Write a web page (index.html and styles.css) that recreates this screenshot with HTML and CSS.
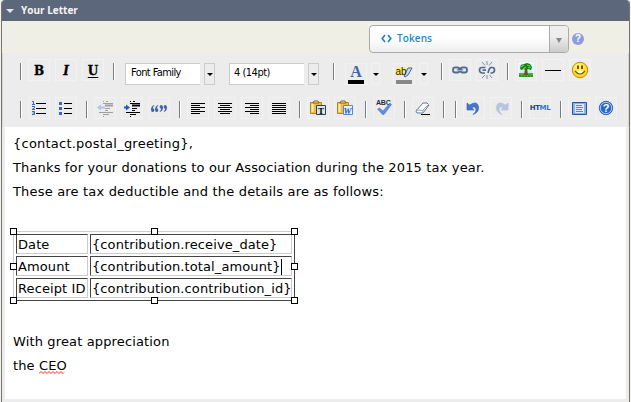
FILE: index.html
```html
<!DOCTYPE html>
<html lang="en">
<head>
<meta charset="utf-8">
<title>Your Letter</title>
<link rel="stylesheet" href="styles.css">
</head>
<body>
<main class="panel">
  <header class="head"><i class="tri"></i><span>Your Letter</span></header>
  <div class="tokenbar">
    <div class="token">
      <div class="tokenmain"><svg width="11" height="9" viewBox="0 0 11 9"><path d="M4 1 1.200 4.500 4 8M7 1l2.800 3.500L7 8" fill="none" stroke="#1684c2" stroke-width="1.600"/></svg><span>Tokens</span></div>
      <div class="tokendrop"><i></i></div>
    </div>
    <span class="hint">?</span>
  </div>
  <div class="tools">
    <div class="row">
      <i class="sep"></i>
      <b class="btn glyph">B</b>
      <b class="btn glyph it">I</b>
      <b class="btn glyph un">U</b>
      <i class="sep"></i>
      <div class="combo first"><span class="field">Font Family</span><span class="arrow"><i></i></span></div>
      <div class="combo second"><span class="field size">4 (14pt)</span><span class="arrow"><i></i></span></div>
      <i class="sep s3"></i>
      <div class="split colour"><span class="btn"><svg viewBox="0 0 22 22"><text x="11" y="14" class="lettera">A</text><path d="M3 17h16v4H3z"/></svg></span><span class="drop"><i></i></span></div>
      <div class="split"><span class="btn"><svg viewBox="0 0 22 22"><path d="M3 4h10v9H3z" fill="#fff06a"/><path d="m11 13 4-8h4l-4 7-3 2z" fill="#c5daf5" stroke="#46648f"/><text x="2.500" y="12" font-size="10" class="svgt">ab</text><path d="M3 17h16v4H3z" fill="#888"/></svg></span><span class="drop"><i></i></span></div>
      <i class="sep s4"></i>
      <span class="btn"><svg viewBox="0 0 22 22"><g fill="none" stroke="#53698d" stroke-width="1.800"><rect x="4" y="8.500" width="6.500" height="5" rx="2.300"/><rect x="11.500" y="8.500" width="6.500" height="5" rx="2.300"/><path d="M8 11h6"/></g><path d="M5 10h4M13 10h4M7 11.500h8" stroke="#c4d6ee" stroke-width=".7"/></svg></span>
      <span class="btn"><svg viewBox="0 0 22 22"><g fill="none" stroke="#53698d" stroke-width="1.700"><path d="M9.500 8.500H6q-2.500 0-2.500 2.500T6 14h3M6.500 11.200h3.500M12 14l1-3.500q1-2.500 3.500-2 2 0 2 2.500T16 14h-1.500"/></g><path d="M6 3l3 3.500M11 2v4M16 3l-3 3.500M6 19l3-3M11 20v-4M16 19l-2.500-3" stroke="#7890b0" fill="none"/></svg></span>
      <i class="sep"></i>
      <span class="btn"><svg viewBox="0 0 22 22"><path d="M4 4h14v14H4z" fill="#c8edfc" stroke="#fff"/><path d="M4 14h14v4H4z" fill="#43b52b"/><path d="M4 17h14" stroke="#28671b" stroke-dasharray="2 1"/><path d="M10 9h2l1 7H9z" fill="#79501c"/><path d="m5 9 1-3 3-1 3-1 3 1 2 3-1 3-3-1-2 1-2-1-3 1z" fill="#187d18"/><path d="m6 8 3-2M12 6l3 1M8 10l3-2M13 9l3-1" stroke="#70cc43" stroke-width="1.300"/></svg></span>
      <span class="btn"><svg viewBox="0 0 22 22"><path d="M3 11.500h16" stroke="#000"/></svg></span>
      <span class="btn"><svg viewBox="0 0 22 22"><defs><radialGradient id="sun" cx=".4" cy=".3"><stop stop-color="#fff895"/><stop offset="1" stop-color="#ffdc16"/></radialGradient></defs><circle cx="11" cy="11" r="7.700" fill="url(#sun)" stroke="#b98b12"/><path d="M9 6.500v3.500M13 6.500v3.500" stroke="#533a09" stroke-width="1.700"/><path d="M6 12q5 6 10 0" fill="#fff" stroke="#76520a" stroke-width="1.200"/></svg></span>
    </div>
    <div class="row row2">
      <i class="sep"></i>
      <span class="btn"><svg viewBox="0 0 22 22"><path d="M8 6.500h10M8 11.500h10M8 16.500h10" stroke="#000"/><path d="M4 4.500h1.500v3M4 7.500h3M4 9.500h2.500v1.500L4 12.500h3M4 14.500h2.500v3H4M4.500 16h2" fill="none" stroke="#3565bd"/></svg></span>
      <span class="btn"><svg viewBox="0 0 22 22"><path d="M9 6.500h8M9 11.500h8M9 16.500h8" stroke="#000"/><path d="M4 5h3v3H4zM4 10h3v3H4zM4 15h3v3H4z" fill="#3869bd"/></svg></span>
      <i class="sep"></i>
      <span class="btn faded"><svg viewBox="0 0 22 22"><g id="indentlines" stroke="#000"><path d="M9 4.500h1m2 0h2M9 6.500h10M11 8.500h8M11 11.500h5M11 13.500h3M5 15.500h14M9 17.500h6M9 19.500h1"/><path d="M11 8.500h8" stroke-width="2"/></g><path d="m3 10.500 4-3v2h4v2H7v2z" fill="#3e6fd0"/></svg></span>
      <span class="btn"><svg viewBox="0 0 22 22"><use href="#indentlines"/><path d="m9 10.500-4-3v2H3v2h2v2z" fill="#2459bd"/></svg></span>
      <span class="btn"><svg viewBox="0 0 22 22"><g fill="#3f65a5"><path id="quotemark" d="M6.200 8Q3 9 3 12.500q0 2.500 1.700 2.500t1.700-2q0-1.800-1.600-1.800Q5 9.500 6.200 9z"/><use href="#quotemark" x="4"/><use href="#quotemark" transform="rotate(180 11 11.500)"/><use href="#quotemark" transform="rotate(180 9 11.500)"/></g></svg></span>
      <i class="sep"></i>
      <span class="btn"><svg viewBox="0 0 22 22"><path d="M4 6.500h14M4 8.500h9M4 10.500h14M4 12.500h9M4 14.500h14M4 16.500h9" stroke="#000"/></svg></span>
      <span class="btn"><svg viewBox="0 0 22 22"><path d="M4 6.500h14M6 8.500h10M4 10.500h14M6 12.500h10M4 14.500h14M6 16.500h10" stroke="#000"/></svg></span>
      <span class="btn"><svg viewBox="0 0 22 22"><path d="M4 6.500h14M9 8.500h9M4 10.500h14M9 12.500h9M4 14.500h14M9 16.500h9" stroke="#000"/></svg></span>
      <span class="btn"><svg viewBox="0 0 22 22"><path d="M4 6.500h14M4 8.500h14M4 10.500h14M4 12.500h14M4 14.500h14M4 16.500h14" stroke="#000"/></svg></span>
      <i class="sep"></i>
      <span class="btn"><svg viewBox="0 0 22 22"><g id="clipboard"><path d="M3.500 5.500h11v11h-11z" fill="#eabd45" stroke="#b98323"/><path d="M6 6 7 4h4l1 2z" fill="#fff0a0" stroke="#84611e"/><path d="M5.500 7v8" stroke="#fff0a0" stroke-width="2"/></g><path d="M9.500 8.500h9v9h-9z" fill="#dce4ec" stroke="#344150"/><text x="11" y="16.500" class="serift">T</text></svg></span>
      <span class="btn"><svg viewBox="0 0 22 22"><use href="#clipboard"/><path d="M9.500 8.500h9v9h-9z" fill="#e5efff" stroke="#5e88bd"/><text x="9.500" y="16.500" class="serift word">W</text></svg></span>
      <i class="sep"></i>
      <span class="btn"><svg viewBox="0 0 22 22"><text x="3" y="8" class="abc">ABC</text><path d="m4.500 12 2-1 3.500 3 6.500-7.500 2 1L11 17.500H9.500z" fill="#5b8fe0" stroke="#416db3" stroke-width=".5"/></svg></span>
      <i class="sep"></i>
      <span class="btn"><svg viewBox="0 0 22 22"><path d="m4 14 7-8q5-1 6 2l-6 8H6q-2 0-2-2z" fill="#fff" stroke="#60728f"/><path d="M11 16v-3l6-6M4 13l7 .500" fill="none" stroke="#91a5c5"/><path d="M9 17.500h9" stroke="#000"/></svg></span>
      <i class="sep"></i><i class="sep"></i>
      <span class="btn"><svg viewBox="0 0 22 22"><g id="turn"><path d="M4 6v7h7L8.800 10.500Q12.500 9 13 12q.3 3-3 5.500 6-2 5.500-7.500Q14.500 3 6.500 8z" fill="#4777ce" stroke="#315fae" stroke-width=".6"/></g></svg></span>
      <span class="btn pale"><svg viewBox="0 0 22 22"><use href="#turn" transform="matrix(-1 0 0 1 22 0)"/></svg></span>
      <i class="sep"></i>
      <span class="btn html">HT<em>ML</em></span>
      <i class="sep"></i>
      <span class="btn"><svg viewBox="0 0 22 22"><path d="M4.500 5.500h14v12h-14z" fill="#83b3f3" stroke="#2e549c"/><path d="M7 7h9v9H7z" fill="#dcebff"/><path d="M8 8.500h6M8 10.500h7M8 12.500h6M8 14.500h7" stroke="#5b85c8"/></svg></span>
      <span class="btn"><svg viewBox="0 0 22 22"><circle cx="11" cy="11" r="6.700" fill="#2867c8" stroke="#3662aa"/><circle cx="11" cy="11" r="5.700" fill="none" stroke="#a8cbff"/><text x="11" y="15" class="q">?</text></svg></span>
    </div>
  </div>
  <section class="editor">
    <p class="l1">{contact.postal_greeting},</p>
    <p class="l2">Thanks for your donations to our Association during the 2015 tax year.</p>
    <p class="l3">These are tax deductible and the details are as follows:</p>
    <div class="tablebox">
      <table>
        <tr><td>Date</td><td>{contribution.receive_date}</td></tr>
        <tr><td>Amount</td><td>{contribution.total_amount}<i class="caret"></i></td></tr>
        <tr><td>Receipt ID</td><td>{contribution.contribution_id}</td></tr>
      </table>
      <i class="h t l"></i><i class="h t c"></i><i class="h t r"></i>
      <i class="h m l"></i><i class="h m r"></i>
      <i class="h b l"></i><i class="h b c"></i><i class="h b r"></i>
    </div>
    <p class="l4">With great appreciation</p>
    <p class="l5">the <span class="misspelt">CEO<svg width="27" height="3" viewBox="0 0 27 3"><path d="M0 2.500 2 .500l2 2 2-2 2 2 2-2 2 2 2-2 2 2 2-2 2 2 2-2 2 2 1-1" fill="none" stroke="#f22"/></svg></span></p>
  </section>
</main>
</body>
</html>
```
FILE: styles.css
```css
* { box-sizing: border-box; }
body { margin: 0; background: #f3f3ea; width: 631px; height: 402px; overflow: hidden; font-family: "DejaVu Sans", sans-serif; }
.panel { margin-left: 1px; width: 629px; height: 402px; background: #ececec; border-left: 1px solid #747474; border-right: 1px solid #747474; border-radius: 4px 4px 0 0; overflow: hidden; }
.head { height: 21px; background: #5d677b; display: flex; align-items: center; padding: 0 0 2px 4px; color: #f5f5f5; font: bold 10px "Open Sans", sans-serif; letter-spacing: 0; }
.tri { border: 4px solid transparent; border-top-color: #e7e7e7; border-bottom: 0; margin-right: 7px; margin-top: 3px; }
.tokenbar { height: 32px; background: #efefe5; display: flex; padding: 4px 0 0 367px; }
.token { width: 200px; height: 28px; display: flex; border: 1px solid #aaa; border-radius: 4px; overflow: hidden; background: linear-gradient(#fff 45%, #eee); }
.tokenmain { flex: 1; display: flex; align-items: center; gap: 5px; padding: 0 0 2px 11px; color: #2786c2; font: 600 10px "Open Sans", sans-serif; letter-spacing: .1px; }
.tokendrop { width: 19px; border-left: 1px solid #aaa; background: linear-gradient(#eee 40%, #ccc); display: flex; align-items: center; justify-content: center; }
.tokendrop i { border: 3px solid transparent; border-top: 5px solid #888; border-bottom: 0; margin-top: 2px; }
.hint { width: 12px; height: 12px; margin: 8px 0 0 3px; border-radius: 50%; background: #8f9bdc; color: #fff; font: bold 10px/12px "Liberation Sans", sans-serif; text-align: center; }
.tools { height: 74px; padding: 6px 0 0 13px; border-left: 1px solid #d8d8d8; border-right: 1px solid #d8d8d8; }
.row { display: flex; gap: 5px; height: 26px; }
.row2 { margin-top: 12px; }
.sep { flex: none; width: 7px; height: 17px; margin-top: 4px; background: linear-gradient(90deg, #807883 50%, #fff 50%) 4px 0 / 2px 17px no-repeat; }
.btn { flex: none; width: 22px; height: 22px; border: 1px solid #f2f2f2; display: flex; align-items: center; justify-content: center; }
.btn svg { display: block; flex: none; width: 22px; height: 22px; }
.glyph { font: bold 12px/20px "DejaVu Serif", serif; padding-top: 2px; -webkit-text-stroke: .3px #000; }
.it { font-style: italic; }
.un { text-decoration: underline; text-underline-offset: 2px; }
.combo { display: flex; gap: 4px; margin-top: 4px; height: 22px; }
.first { margin-left: 4px; }
.second { margin-left: 9px; }
.field { width: 75px; border: 1px solid #ccc; border-right: 0; background: #fff; padding: 2px 0 0 5px; font: 11px/13px "DejaVu Sans Condensed", "DejaVu Sans", sans-serif; letter-spacing: -.6px; white-space: nowrap; }
.size { padding-left: 4px; letter-spacing: -.5px; }
.arrow { width: 11px; border: 1px solid #ccc; display: flex; align-items: center; justify-content: center; }
.arrow i, .drop i { border: 3px solid transparent; border-top-color: #000; border-bottom: 0; }
.s3 { margin-left: 5px; }
.s4 { margin-left: 4px; }
.split { display: flex; gap: 4px; margin-left: 8px; margin-top: 4px; }
.colour { margin-left: 4px; }
.drop { width: 9px; height: 22px; border: 1px solid #f2f2f2; display: flex; align-items: center; justify-content: center; }
.svgt { font-family: "Liberation Sans", sans-serif; fill: #222; }
.lettera { font: bold 16px "Liberation Serif", serif; fill: #3f66a5; text-anchor: middle; }
.faded svg, .pale svg { opacity: .32; }
.serift { font: bold 9px "Liberation Serif", serif; }
.word { font-style: italic; fill: #285caa; }
.abc { font: bold 7px "Liberation Sans", sans-serif; fill: #222e45; letter-spacing: -.2px; }
.q { font: bold 11px "Liberation Sans", sans-serif; fill: #fff; text-anchor: middle; }
.html { font: bold 7px "DejaVu Sans", sans-serif; color: #24477c; letter-spacing: -.4px; }
.html em { font-style: normal; color: #3974ce; }
.editor { margin: 0 3px; height: 272px; padding: 5px 8px 0; background: #fff; font-size: 13px; line-height: 24px; color: #000; }
p { margin: 0; height: 24px; white-space: nowrap; }
.l1 { letter-spacing: .23px; }
.l2 { letter-spacing: .15px; }
.l3 { letter-spacing: .18px; }
.l4, .l5 { letter-spacing: .14px; }
.tablebox { position: relative; width: 282px; height: 70px; margin: 27px 0 29px; }
table { width: 282px; height: 70px; border: 1px solid; border-color: #ccc #444 #444 #ccc; border-spacing: 2px; table-layout: fixed; line-height: 17px; letter-spacing: .1px; }
td { height: 20px; padding: 1px 0 0 1px; border: 1px solid; border-color: #444 #ccc #ccc #444; white-space: nowrap; }
td:first-child { width: 72px; }
.caret { display: inline-block; width: 1px; height: 16px; margin: -2px 0 -1px; background: #000; vertical-align: -3px; }
.h { position: absolute; width: 7px; height: 7px; background: #fff; border: 1px solid #000; }
.t { top: -3px; }
.m { top: 32px; }
.b { bottom: -3px; }
.l { left: -3px; }
.c { left: 138px; }
.r { right: -3px; }
.misspelt { position: relative; }
.misspelt svg { position: absolute; left: 0; top: 13px; }
```
